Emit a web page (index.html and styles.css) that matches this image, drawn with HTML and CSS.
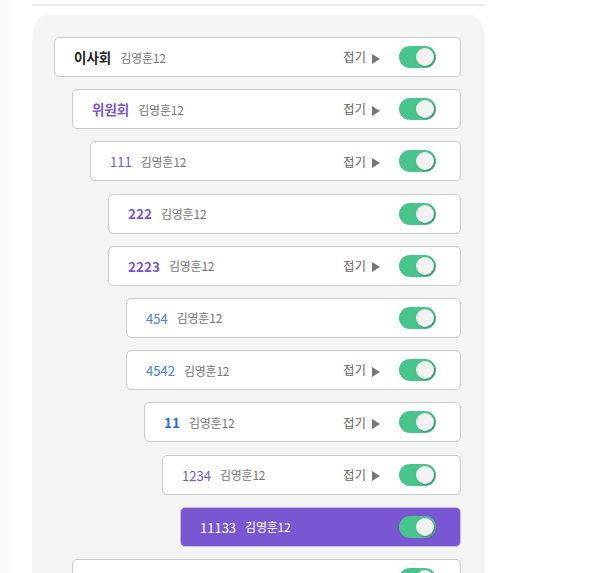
FILE: index.html
```html
<!DOCTYPE html>
<html lang="ko">
<head>
<meta charset="utf-8">
<link rel="stylesheet" href="styles.css">
</head>
<body>
<div class="page">
  <div class="topline"></div>
  <div class="panel">
    <div class="row lv0"><span class="title t-black bold">이사회</span><span class="name">김영훈12</span><span class="fold">접기<span class="tri"></span></span><span class="toggle"><span class="knob"></span></span></div>
    <div class="row lv1"><span class="title t-purple bold">위원회</span><span class="name">김영훈12</span><span class="fold">접기<span class="tri"></span></span><span class="toggle"><span class="knob"></span></span></div>
    <div class="row lv2"><span class="title t-purple">111</span><span class="name">김영훈12</span><span class="fold">접기<span class="tri"></span></span><span class="toggle"><span class="knob"></span></span></div>
    <div class="row lv3"><span class="title t-purple bold">222</span><span class="name">김영훈12</span><span class="toggle"><span class="knob"></span></span></div>
    <div class="row lv3"><span class="title t-purple bold">2223</span><span class="name">김영훈12</span><span class="fold">접기<span class="tri"></span></span><span class="toggle"><span class="knob"></span></span></div>
    <div class="row lv4"><span class="title t-blue">454</span><span class="name">김영훈12</span><span class="toggle"><span class="knob"></span></span></div>
    <div class="row lv4"><span class="title t-blue">4542</span><span class="name">김영훈12</span><span class="fold">접기<span class="tri"></span></span><span class="toggle"><span class="knob"></span></span></div>
    <div class="row lv5"><span class="title t-blue2 bold">11</span><span class="name">김영훈12</span><span class="fold">접기<span class="tri"></span></span><span class="toggle"><span class="knob"></span></span></div>
    <div class="row lv6"><span class="title t-purple">1234</span><span class="name">김영훈12</span><span class="fold">접기<span class="tri"></span></span><span class="toggle"><span class="knob"></span></span></div>
    <div class="row lv7 active"><span class="title">11133</span><span class="name">김영훈12</span><span class="toggle"><span class="knob"></span></span></div>
    <div class="row lv1"><span class="title t-black bold">&nbsp;</span><span class="name"></span><span class="toggle"><span class="knob"></span></span></div>
  </div>
</div>
</body>
</html>
```
FILE: styles.css
```css
html, body {
  margin: 0;
  padding: 0;
  background: #fff;
  height: 100%;
  overflow: hidden;
}
body {
  border-left: 9px solid #f9f9f9;
  font-family: "Noto Sans CJK KR", "Noto Sans", sans-serif;
}
.page {
  padding-left: 23px;
  width: 453px;
  padding-top: 4px;
}
.topline {
  height: 2px;
  background: #ececec;
}
.panel {
  margin-top: 9px;
  background: #f4f4f4;
  border-radius: 14px 14px 0 0 / 26px 26px 0 0;
  padding: 22px 24px 0 22px;
  display: flex;
  flex-direction: column;
  gap: 12.2px;
  height: 558px;
  overflow: hidden;
  box-sizing: border-box;
}
.row {
  box-sizing: border-box;
  height: 40px;
  flex: none;
  background: #fff;
  border: 1px solid #cbcbcb;
  border-radius: 5px;
  display: flex;
  align-items: center;
  padding: 1px 24px 0 19px;
}
.lv1 { margin-left: 18px; }
.lv2 { margin-left: 36px; }
.lv3 { margin-left: 54px; }
.lv4 { margin-left: 72px; }
.lv5 { margin-left: 90px; }
.lv6 { margin-left: 108px; }
.lv7 { margin-left: 126px; }
.title {
  font-size: 13px;
  margin-right: 9px;
  line-height: 1;
}
.bold { font-weight: 700; font-size: 13.5px; }
.t-black { color: #222; }
.t-purple { color: #7a55d4; }
.t-blue { color: #4a7ee0; }
.t-blue2 { color: #1f6ee0; }
.name {
  font-size: 12px;
  color: #777;
  letter-spacing: -0.2px;
  line-height: 1;
}
.fold {
  margin-left: auto;
  font-size: 12.5px;
  color: #666;
  display: flex;
  align-items: center;
  margin-right: 19px;
  line-height: 1;
}
.tri {
  width: 0;
  height: 0;
  border-top: 5px solid transparent;
  border-bottom: 5px solid transparent;
  border-left: 8px solid #777;
  margin-left: 6px;
  margin-top: 2px;
}
.toggle {
  margin-left: auto;
  width: 37px;
  height: 22px;
  border-radius: 11px;
  background: #48c58c;
  display: flex;
  align-items: center;
  justify-content: flex-end;
  padding: 0 2px;
  box-sizing: border-box;
  flex: none;
  margin-top: -1px;
}
.fold + .toggle { margin-left: 0; }
.knob {
  width: 18px;
  height: 18px;
  border-radius: 50%;
  background: #f2f2f2;
  box-shadow: 1px 1px 2px rgba(0,0,0,0.3);
}
.active {
  background: #7a57d2;
  border-color: #c8c0e0;
}
.active .title, .active .name {
  color: #fff;
}
```
